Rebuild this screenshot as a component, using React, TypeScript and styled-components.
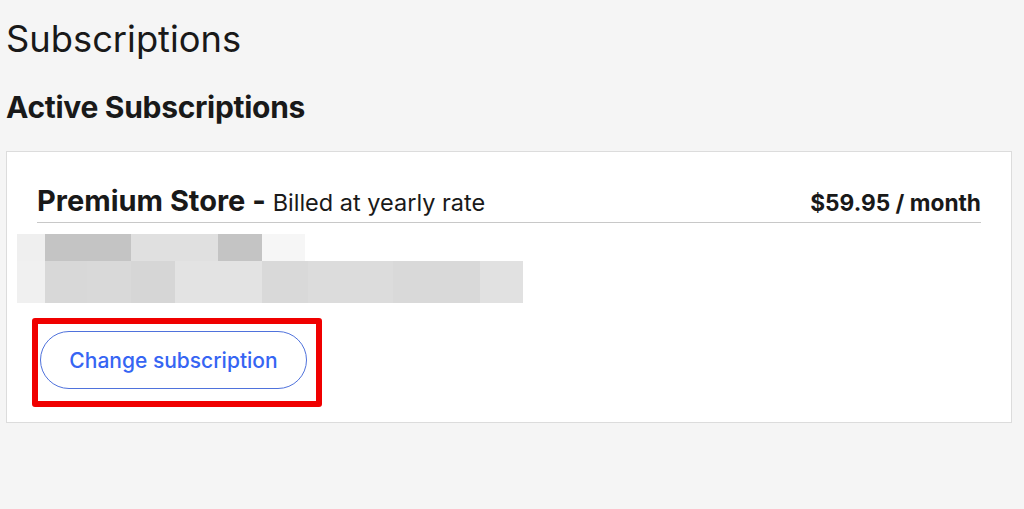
import React from "react";
import styled, { createGlobalStyle } from "styled-components";

const Global = createGlobalStyle`
  html, body { margin: 0; padding: 0; background: #f5f5f5; }
  body { font-family: Inter, "Noto Sans", "Liberation Sans", sans-serif; color: #191919; }
`;

const Page = styled.div`
  padding: 17px 12px 0 6px;
`;

const Title = styled.h1`
  margin: 0;
  font-size: 36.3px;
  line-height: 44px;
  font-weight: 400;
`;

const SectionTitle = styled.h2`
  margin: 29px 0 0;
  font-size: 30px;
  line-height: 34px;
  font-weight: 700;
  letter-spacing: -0.3px;
`;

const Card = styled.section`
  margin-top: 27px;
  background: #fff;
  border: 1px solid #dcdcdc;
  padding: 33px 30px 15px 30px;
`;

const Header = styled.div`
  display: flex;
  align-items: baseline;
  justify-content: space-between;
  border-bottom: 1px solid #c8c8c8;
  padding-bottom: 5px;
`;

const Plan = styled.div`
  font-size: 29px;
  line-height: 32px;
  font-weight: 700;
`;

const Billing = styled.span`
  font-size: 23.5px;
  line-height: 22px;
  font-weight: 400;
`;

const Price = styled.div`
  font-size: 22.7px;
  line-height: 26px;
  font-weight: 700;
`;

const Redacted = styled.div`
  margin: 11px 0 0 -20px;
  display: flex;
  flex-direction: column;
`;

const PixelRow = styled.div<{ $h: number }>`
  display: flex;
  height: ${(p) => p.$h}px;
`;

const Pixel = styled.div<{ $w: number; $c: string }>`
  width: ${(p) => p.$w}px;
  background: ${(p) => p.$c};
`;

const Highlight = styled.div`
  display: inline-flex;
  margin: 15px 0 0 -5px;
  border: 6px solid #f00000;
  border-radius: 3px;
  padding: 7px 9px 12px 2px;
`;

const OutlineButton = styled.button`
  width: 267px;
  height: 58px;
  border: 1px solid #4f72dc;
  border-radius: 29px;
  background: #fff;
  color: #3665f3;
  font-family: Inter, "Noto Sans", "Liberation Sans", sans-serif;
  font-size: 21px;
  font-weight: 500;
  cursor: pointer;
  padding: 0;
`;

const row1: [number, string][] = [
  [28, "#efefef"],
  [86, "#c4c4c4"],
  [87, "#e0e0e0"],
  [44, "#c4c4c4"],
  [43, "#f6f6f6"],
];
const row2: [number, string][] = [
  [28, "#f0f0f0"],
  [42, "#d8d8d8"],
  [44, "#d9d9d9"],
  [44, "#d6d6d6"],
  [43, "#e3e3e3"],
  [44, "#e3e3e3"],
  [46, "#d9d9d9"],
  [85, "#dcdcdc"],
  [87, "#d9d9d9"],
  [43, "#e1e1e1"],
];

export default function App() {
  return (
    <>
      <Global />
      <Page>
        <Title>Subscriptions</Title>
        <SectionTitle>Active Subscriptions</SectionTitle>
        <Card>
          <Header>
            <Plan>
              Premium Store - <Billing>Billed at yearly rate</Billing>
            </Plan>
            <Price>$59.95 / month</Price>
          </Header>
          <Redacted>
            <PixelRow $h={27}>
              {row1.map(([w, c], i) => (
                <Pixel key={i} $w={w} $c={c} />
              ))}
            </PixelRow>
            <PixelRow $h={42}>
              {row2.map(([w, c], i) => (
                <Pixel key={i} $w={w} $c={c} />
              ))}
            </PixelRow>
          </Redacted>
          <Highlight>
            <OutlineButton>Change subscription</OutlineButton>
          </Highlight>
        </Card>
      </Page>
    </>
  );
}
